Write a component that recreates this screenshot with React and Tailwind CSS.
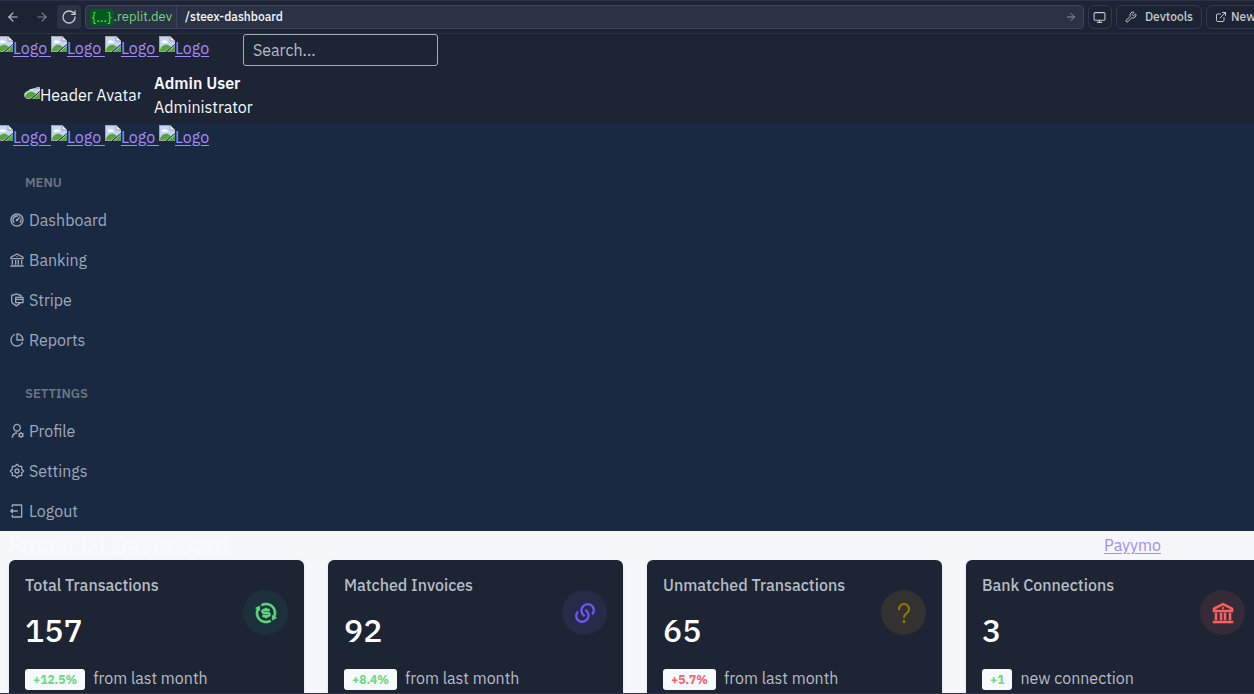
import { ArrowLeft, ArrowRight, RotateCw, Monitor, Wrench, ExternalLink } from "lucide-react";
import {
  RiDashboard2Line,
  RiBankLine,
  RiSecurePaymentLine,
  RiPieChartLine,
  RiUserSettingsLine,
  RiLogoutBoxLine,
  RiExchangeDollarLine,
  RiLinksLine,
  RiQuestionMark,
} from "react-icons/ri";

function BrokenImage() {
  return (
    <svg viewBox="0 0 16 16" className="size-4 shrink-0" aria-hidden="true">
      <path d="M0 0h11l5 5v3L6 16H0z" fill="#c5d5f5" />
      <path d="M0 0h11v1H1v15H0z" fill="#a3a3a3" />
      <path d="M11 0l5 5h-5z" fill="#f4f4f4" stroke="#9a9a9a" strokeWidth="1" />
      <path d="M3 6c0-1 1-2 2-2s2 1 3 1 1 2 0 2H4C3 7 3 7 3 6z" fill="#fff" />
      <path d="M1 15c0-4 4-7 8-6l3 2-6 4z" fill="#54a732" />
      <path d="M0 15h7v1H0z" fill="#a3a3a3" />
      <path d="M16 10v6H9z" fill="#54a732" />
      <path d="M16 9v1l-7 6H8z" fill="#e8edf5" />
    </svg>
  );
}

function GearIcon({ className }) {
  return (
    <svg viewBox="0 0 24 24" className={className} fill="none" stroke="currentColor" strokeWidth="2" strokeLinejoin="round" aria-hidden="true">
      <path d="M12 2 15 5H19V9L22 12 19 15V19H15L12 22 9 19H5V15L2 12 5 9V5H9Z" />
      <circle cx="12" cy="12" r="3" />
    </svg>
  );
}

function Logos() {
  return (
    <div className="-ml-[3px] flex h-7 items-center text-[#a48afa]">
      {[0, 1, 2, 3].map((n) => (
        <a key={n} href="#home" className="flex items-start">
          <BrokenImage />
          <span className="w-[38px] leading-6 whitespace-pre underline underline-offset-2">{n < 3 ? "Logo " : "Logo"}</span>
        </a>
      ))}
    </div>
  );
}

function MenuGroup({ title, items }) {
  return (
    <section>
      <h2 className="pl-[25px] text-[13px] leading-5 font-semibold text-[#6c7580] uppercase">{title}</h2>
      <ul className="mt-[7px]">
        {items.map(([label, Icon]) => (
          <li key={label}>
            <a href={`#${label.toLowerCase()}`} className="flex h-10 items-center gap-1 pl-[9px]">
              <Icon className="size-4" />
              {label}
            </a>
          </li>
        ))}
      </ul>
    </section>
  );
}

const mainMenu = [
  ["Dashboard", RiDashboard2Line],
  ["Banking", RiBankLine],
  ["Stripe", RiSecurePaymentLine],
  ["Reports", RiPieChartLine],
];

const settingsMenu = [
  ["Profile", RiUserSettingsLine],
  ["Settings", GearIcon],
  ["Logout", RiLogoutBoxLine],
];

const stats = [
  { title: "Total Transactions", value: "157", change: "+12.5%", note: "from last month", Icon: RiExchangeDollarLine, weight: 0.6, tone: "bg-[#1c313c] text-[#5fd97a]", badge: "text-[#67dc7e]" },
  { title: "Matched Invoices", value: "92", change: "+8.4%", note: "from last month", Icon: RiLinksLine, weight: 0.2, tone: "bg-[#262b47] text-[#7357ff]", badge: "text-[#67dc7e]" },
  { title: "Unmatched Transactions", value: "65", change: "+5.7%", note: "from last month", Icon: RiQuestionMark, weight: 0, tone: "bg-[#343131] text-[#957700]", badge: "text-[#ff5e65]" },
  { title: "Bank Connections", value: "3", change: "+1", note: "new connection", Icon: RiBankLine, weight: 0.6, tone: "bg-[#342a38] text-[#ff5e5e]", badge: "text-[#67dc7e]" },
];

function StatCard({ title, value, change, note, Icon, weight, tone, badge }) {
  return (
    <article className="rounded-md bg-[#1d2433] px-4 pt-[15px] pb-4 text-[#b6bcc5] shadow-sm">
      <div className="flex justify-between">
        <div>
          <h2 className="leading-5 font-medium">{title}</h2>
          <p className="mt-[15px] text-[32px] leading-10 font-medium text-white">{value}</p>
        </div>
        <span className={`mt-[15px] flex size-[45px] shrink-0 items-center justify-center rounded-full ${tone}`}>
          <Icon className="size-6" stroke="currentColor" strokeWidth={weight} />
        </span>
      </div>
      <p className="mt-4 flex items-center gap-2">
        <span className={`mt-[3px] rounded-[3px] bg-[#f7fafd] px-2 text-xs leading-[21px] font-bold ${badge}`}>{change}</span>
        {note}
      </p>
    </article>
  );
}

function BrowserBar() {
  return (
    <div className="flex h-[34px] shrink-0 items-center border-y border-[#2b3245] bg-[#1c2333] text-[#c2c8cc]">
      <button aria-label="Back" className="flex w-[26px] justify-center"><ArrowLeft size={14} strokeWidth={2} /></button>
      <button aria-label="Forward" className="flex w-[31px] justify-center text-[#7b8190]"><ArrowRight size={14} strokeWidth={2} /></button>
      <button aria-label="Reload" className="flex size-6 items-center justify-center rounded bg-[#2b3245]"><RotateCw size={16} strokeWidth={2} /></button>
      <div className="ml-1 flex h-6 min-w-0 flex-1 items-center rounded border border-[#3c445c] bg-[#2b3245]">
        <span className="flex h-full items-center border-r border-[#3c445c] px-1 text-[13px] text-[#6cd97e]">
          <span className="rounded-[3px] bg-[#005c1b] px-[2px] leading-[17px]">{"{...}"}</span>.replit.dev
        </span>
        <input aria-label="Path" defaultValue="/steex-dashboard" className="min-w-0 flex-1 bg-transparent px-2 text-xs font-medium text-[#f5f9fc] outline-none" />
        <button aria-label="Go" className="p-1 pr-[6px] text-[#8d939f]"><ArrowRight size={12} strokeWidth={2} /></button>
      </div>
      <button aria-label="Device" className="ml-1 flex size-6 items-center justify-center rounded-md border border-[#323a50]"><Monitor size={13} /></button>
      <button className="ml-1 flex h-6 items-center gap-2 rounded-md border border-[#323a50] px-2 text-xs font-medium"><Wrench size={12} />Devtools</button>
      <button className="-mr-8 ml-1 flex h-6 w-20 shrink-0 items-center gap-1 rounded-md border border-[#323a50] px-2 text-xs font-medium"><ExternalLink size={12} className="shrink-0" />New</button>
    </div>
  );
}

export default function App() {
  return (
    <div className="flex h-screen flex-col overflow-hidden border-b border-[#2b3245] bg-[#f5f7fb] font-['IBM_Plex_Sans','Roboto',sans-serif] text-base">
      <BrowserBar />
      <header className="shrink-0 bg-[#1d2433] text-[#f5f9fc]">
        <div className="flex h-8 items-start gap-[30px]">
          <Logos />
          <input type="search" aria-label="Search" placeholder="Search..." className="h-8 w-[195px] rounded-[3px] border border-[#a3acbd] bg-transparent px-[9px] placeholder:text-[#b6bcc5] outline-none" />
        </div>
        <button className="flex h-[57px] items-center gap-3 pl-6 text-left">
          <span className="flex h-6 w-[118px] items-start overflow-hidden rounded-[50%] whitespace-nowrap">
            <BrokenImage />Header Avatar
          </span>
          <span className="leading-6">
            <span className="block font-semibold">Admin User</span>
            <span className="block">Administrator</span>
          </span>
        </button>
      </header>
      <nav className="shrink-0 bg-[#1a2942] text-[#9ba8b9]">
        <Logos />
        <div className="mt-[22px] flex flex-col gap-6">
          <MenuGroup title="Menu" items={mainMenu} />
          <MenuGroup title="Settings" items={settingsMenu} />
        </div>
      </nav>
      <main className="min-h-0 flex-1">
        <div className="flex h-[29px] items-start justify-between pt-[2px] pr-[93px] pl-[9px]">
          <h1 className="text-2xl leading-6 text-[#f8fafd]">Financial Dashboard</h1>
          <a href="#payymo" className="text-[#a48afa] underline underline-offset-2">Payymo</a>
        </div>
        <div className="-mr-[7px] grid grid-cols-4 gap-6 pl-[9px]">
          {stats.map((stat) => <StatCard key={stat.title} {...stat} />)}
        </div>
      </main>
    </div>
  );
}
